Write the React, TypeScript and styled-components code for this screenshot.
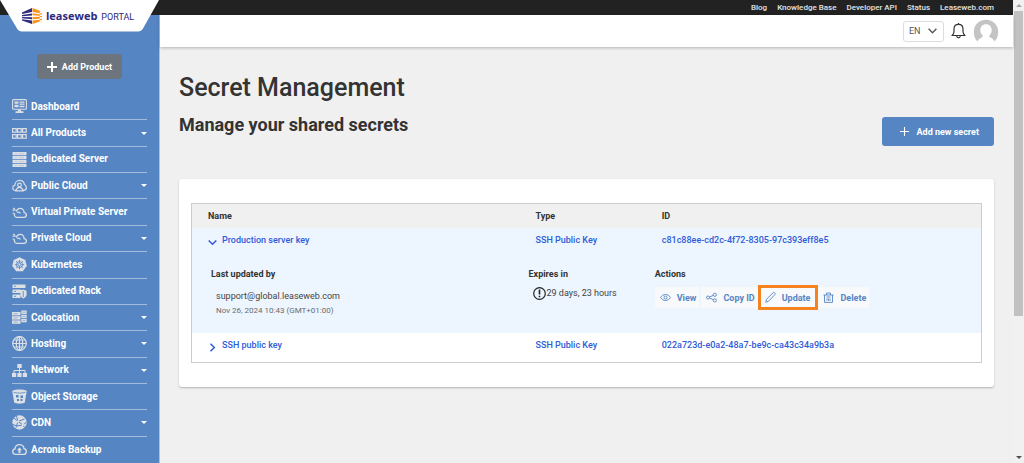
import React from "react";
import styled, { createGlobalStyle, css } from "styled-components";

const GlobalStyle = createGlobalStyle`
  *, *::before, *::after { box-sizing: border-box; }
  body {
    margin: 0;
    background: #f0f0f0;
    color: #333;
    font-family: Roboto, "Liberation Sans", sans-serif;
    font-size: 9px;
    line-height: 14px;
  }
  button, select { font: inherit; }
  a { color: inherit; text-decoration: none; }
  h1, h2, p, ul { margin: 0; padding: 0; }
`;

const Shell = styled.div`
  display: flex;
  min-height: 100vh;
`;

const Page = styled.div`
  position: relative;
  flex: 1;
  min-width: 0;
  display: flex;
  flex-direction: column;
`;

const TopBar = styled.nav`
  display: flex;
  justify-content: flex-end;
  gap: 10px;
  height: 15px;
  padding-right: 19px;
  background: #222;
  color: #e4e4e4;
  font-size: 8px;
  line-height: 15px;
  font-weight: 500;
`;

const Body = styled.div`
  flex: 1;
  display: flex;
`;

const Sidebar = styled.aside`
  width: 160px;
  flex: none;
  display: flex;
  flex-direction: column;
  background: #5685c4;
  border-right: 1px solid #a9c2e2;
`;

const LogoTab = styled.a`
  position: absolute;
  top: 0;
  left: 0;
  width: 159px;
  height: 32px;
  display: flex;
  gap: 4px;
  padding: 8px 0 0 22px;
  color: #2e2a80;
`;

const TabShape = styled.svg`
  position: absolute;
  inset: 0;
`;

const LogoMark = styled.svg`
  position: relative;
  flex: none;
`;

const Brand = styled.span`
  position: relative;
  font-family: "Open Sans", sans-serif;
  font-size: 11px;
  font-weight: 700;
  line-height: 15px;
`;

const BrandSuffix = styled.span`
  position: relative;
  font-size: 9px;
  line-height: 18px;
`;

const AddProduct = styled.button`
  display: flex;
  align-items: center;
  align-self: center;
  gap: 5px;
  height: 25px;
  margin: 39px 0 15px;
  padding: 0 10px;
  border: 0;
  border-radius: 3px;
  background: #6c757d;
  color: #fff;
  font-weight: 700;
`;

const Menu = styled.ul`
  flex: 1;
  display: grid;
  grid-auto-rows: minmax(26px, 1fr);
  padding: 0 12px;
  list-style: none;
`;

const MenuItem = styled.li`
  display: flex;
  border-bottom: 1px solid #a3bcdd;
  &:last-child { border-bottom: 0; }
`;

const MenuLink = styled.a`
  flex: 1;
  display: flex;
  align-items: center;
  gap: 4px;
  color: #fff;
  font-size: 10px;
  font-weight: 700;
`;

const Caret = styled.span`
  margin-left: auto;
  border: 3px solid transparent;
  border-top-color: #fff;
  border-bottom: 0;
`;

const Content = styled.div`
  flex: 1;
  min-width: 0;
`;

const Header = styled.header`
  display: flex;
  align-items: center;
  justify-content: flex-end;
  gap: 7px;
  height: 32px;
  padding-right: 14px;
  background: #fff;
  box-shadow: 0 1px 3px rgba(0, 0, 0, 0.25);
`;

const LanguageBox = styled.label`
  position: relative;
  display: flex;
  align-items: center;
`;

const Language = styled.select`
  appearance: none;
  width: 41px;
  height: 21px;
  padding: 0 0 0 5px;
  border: 1px solid #ddd;
  border-radius: 3px;
  background: #fff;
  color: #555;
`;

const LanguageArrow = styled.svg`
  position: absolute;
  right: 7px;
  pointer-events: none;
`;

const IconButton = styled.button`
  display: flex;
  padding: 0;
  border: 0;
  background: none;
  color: #333;
`;

const Main = styled.main`
  padding: 24px 19px;
`;

const Title = styled.h1`
  font-size: 25px;
  font-weight: 500;
  line-height: 34px;
`;

const SubRow = styled.div`
  display: flex;
  justify-content: space-between;
  align-items: flex-start;
  margin-bottom: 33px;
`;

const Subtitle = styled.h2`
  padding-top: 8px;
  font-size: 18px;
  font-weight: 700;
  line-height: 24px;
`;

const AddSecret = styled.button`
  display: flex;
  align-items: center;
  gap: 8px;
  height: 29px;
  margin-top: 12px;
  padding: 0 15px 0 18px;
  border: 0;
  border-radius: 3px;
  background: #5685c4;
  color: #fff;
  font-weight: 700;
`;

const Card = styled.section`
  padding: 24px 12px;
  border-radius: 3px;
  background: #fff;
  box-shadow: 0 1px 2px rgba(0, 0, 0, 0.25);
`;

const Frame = styled.div`
  border: 1px solid #ccc;
`;

const Table = styled.table`
  width: 100%;
  table-layout: fixed;
  border-collapse: collapse;
  text-align: left;
`;

const HeadCell = styled.th<{ $width?: string }>`
  width: ${(p) => p.$width ?? "auto"};
  height: 24px;
  padding: 0 0 0 20px;
  background: #f0f0f0;
  font-weight: 700;
  &:first-child { padding-left: 16px; }
`;

const Row = styled.tr<{ $open?: boolean }>`
  background: ${(p) => (p.$open ? "#edf5ff" : "#fff")};
`;

const Cell = styled.td`
  height: 29px;
  padding: 5px 0 0 20px;
  vertical-align: top;
  color: #2f5bd7;
  font-weight: 500;
  &:first-child { padding-left: 16px; }
`;

const Toggle = styled.button`
  display: flex;
  gap: 5px;
  padding: 0;
  border: 0;
  background: none;
  color: inherit;
  svg { margin-top: 5px; }
`;

const DetailCell = styled.td`
  height: 76px;
  padding: 10px 0 0 13px;
  vertical-align: top;
  &:first-child { padding-left: 19px; }
`;

const DetailTitle = styled.p`
  font-weight: 700;
`;

const Author = styled.p`
  padding: 8px 0 0 5px;
  color: #444;
`;

const Stamp = styled.p`
  padding: 1px 0 0 5px;
  color: #6b6b6b;
  font-size: 8px;
`;

const Expiry = styled.p`
  display: flex;
  align-items: center;
  padding: 5px 0 0 5px;
  color: #444;
`;

const Actions = styled.div`
  display: flex;
  gap: 2px;
  padding-top: 6px;
`;

const Action = styled.button<{ $highlight?: boolean }>`
  display: flex;
  align-items: center;
  gap: 6px;
  height: 21px;
  padding: 0 3px 0 5px;
  border: 0;
  border-radius: 2px;
  background: #f8f9fb;
  color: #5685c4;
  font-weight: 700;
  white-space: nowrap;
  ${(p) =>
    p.$highlight &&
    css`
      padding: 0 6px 0 5px;
      border-radius: 0;
      outline: 3px solid #f5811f;
      outline-offset: -1px;
    `}
`;

const ScrollTrack = styled.div`
  width: 11px;
  flex: none;
  display: flex;
  flex-direction: column;
  align-items: center;
  padding: 4px 0;
  background: #f1f1f1;
`;

const ScrollArrow = styled.span<{ $down?: boolean }>`
  border: 3px solid transparent;
  ${(p) =>
    p.$down
      ? css`border-top-color: #505050; border-bottom: 0;`
      : css`border-bottom-color: #a3a3a3; border-top: 0;`}
`;

const ScrollThumb = styled.div`
  width: 9px;
  height: 67%;
  margin: 4px 0 auto;
  background: #c1c1c1;
`;

const BG = "#5685c4";

const icons: Record<string, React.ReactNode> = {
  dashboard: (
    <>
      <rect x="0.6" y="0.6" width="13.8" height="9.6" rx="1" fill="none" stroke="currentColor" strokeWidth="1.1" />
      <path d="M2.5 2.5h4v2.3h-4zM7.5 2.5h5v1.2h-5zM7.5 4.6h5v1.2h-5zM2.5 5.8h4v2.4h-4zM7.5 6.8h5v1.4h-5zM6 10.5h3v2H6zM3.5 12.2h8V14h-8z" />
    </>
  ),
  grid: (
    <g fill="none" stroke="currentColor" strokeWidth="1.2">
      {[0.6, 5.6, 10.6].map((x) => (
        <React.Fragment key={x}>
          <rect x={x} y="2.6" width="3.6" height="3.6" />
          <rect x={x} y="8.6" width="3.6" height="3.6" />
        </React.Fragment>
      ))}
    </g>
  ),
  server: (
    <>
      {[0, 4, 8, 12].map((y) => (
        <React.Fragment key={y}>
          <rect x="0.5" y={y} width="14" height="3.2" rx="0.5" />
          <path d={`M3 ${y + 1.6}h2M7 ${y + 1.6}h5`} stroke="#b4c5dc" strokeWidth="0.7" />
        </React.Fragment>
      ))}
    </>
  ),
  publicCloud: (
    <g fill="none" stroke="currentColor" strokeWidth="1.2">
      <path d="M4 12.4H3.4C1.8 12.4.7 11.2.7 9.8c0-1.3.9-2.3 2.1-2.5C2.9 4.5 4.9 2.4 7.6 2.4c2.5 0 4.4 1.7 4.8 4.1 1.2.5 2 1.600 2 3 0 1.700-1.200 2.900-2.800 2.900H11" />
      <circle cx="7.5" cy="7" r="1.8" />
      <path d="M3.800 12.800c.6-2 1.900-3.400 3.700-3.400s3.100 1.400 3.700 3.400z" />
    </g>
  ),
  cloud: (
    <g fill="none" stroke="currentColor" strokeWidth="1.3">
      <path d="M3 8.500c-.6.500-.8 1-.6 1.900.3 1.200 1.300 2 2.600 2h6.800c1.500 0 2.600-1 2.600-2.400 0-1.300-1-2.300-2.300-2.400 0-2.400-1.600-4.200-3.800-4.200-2 0-3.500 1.300-3.900 3.200" />
      <path d="M.5 5.200h3.300M1.300 2.900l1.500 1.200M.7 8.500l1.300-.7M5 7.500c1.400-.6 2.800-.2 3.400 1" />
    </g>
  ),
  kubernetes: (
    <>
      <path d="M7.500.2l5.800 2.700 1.500 6.200-4 5.200H4.200l-4-5.200 1.500-6.200z" />
      <g fill="none" stroke={BG} strokeWidth="0.8">
        <circle cx="7.500" cy="7.600" r="3.100" />
        <path d="M7.500 3v9.200M2.900 7.600h9.200M4.200 4.300l6.600 6.600M10.800 4.300l-6.600 6.600" />
      </g>
      <circle cx="7.500" cy="7.600" r="1" />
    </>
  ),
  rack: (
    <>
      <rect x="0.500" y="0.500" width="13" height="3.600" rx=".5" />
      <rect x="0.500" y="5.500" width="9" height="3.600" rx=".5" />
      <rect x="0.500" y="10.500" width="8" height="3.600" rx=".5" />
      <path d="M11.300 5.500l3.300 1.200v3.500c0 2-1.300 3.400-3.300 4.300-2-.9-3-2.300-3-4.300V6.700z" />
      <path d="M11.300 7v6M2 2.300h2M2 7.300h2M2 12.300h2" stroke={BG} strokeWidth=".8" />
    </>
  ),
  colocation: (
    <>
      {[2, 6.2, 10.4].map((y) => (
        <React.Fragment key={y}>
          <rect x="0" y={y} width="8.500" height="3.400" />
          <rect x="9.300" y={y - 1.5} width="5.400" height="3.400" />
          <path d={`M1.500 ${y + 1.7}h4M10.500 ${y + 0.2}h3`} stroke="#86a5d0" strokeWidth=".8" />
        </React.Fragment>
      ))}
    </>
  ),
  globe: (
    <g fill="none" stroke="currentColor" strokeWidth="1.200">
      <circle cx="7.500" cy="7.500" r="6.800" />
      <ellipse cx="7.500" cy="7.500" rx="3.200" ry="6.800" />
      <path d="M7.500.7v13.600M.7 7.500h13.600M1.800 4h11.400M1.800 11h11.400" />
    </g>
  ),
  network: (
    <>
      <path d="M5.300 1h4.400v4H5.300zM0 10h4.200v4H0zM5.400 10h4.200v4H5.400zM10.800 10H15v4h-4.200z" />
      <path d="M7.500 5v5M2 10V7.500h11V10" fill="none" stroke="currentColor" />
    </>
  ),
  bucket: (
    <>
      <path d="M.3 2.200C.3-.2 14.700-.2 14.700 2.200L12.800 13.500c-1.500 1.500-9.100 1.500-10.600 0z" />
      <path d="M1.500 3.200c2.500 1.200 9.500 1.200 12 0" stroke={BG} strokeWidth=".8" fill="none" />
      <path d="M4 6h2.500v2.500H4zM8.500 6.500h2.500V9H8.500zM5 10h2v2H5zM8.500 10h2v2h-2z" fill={BG} />
    </>
  ),
  cdn: (
    <>
      <circle cx="7.500" cy="7.500" r="7.200" />
      <path d="M2 3l4 3.500L12.500 4M6 6.500l-2 6M6 6.500l5 3.500 1.500 2.500M11 10l3.500-3M4.500 1L6 6.500M0 9l4.500 2L11 10" stroke={BG} strokeWidth="1" fill="none" />
      <circle cx="6" cy="6.500" r="1.300" />
      <circle cx="10.800" cy="10" r="1.200" />
    </>
  ),
  backup: (
    <g fill="none" stroke="currentColor" strokeWidth="1.300">
      <path d="M3.700 12.400C2 12.400.7 11.200.7 9.600c0-1.400 1-2.500 2.300-2.700.2-2.500 2-4.300 4.500-4.300 2.400 0 4.200 1.700 4.500 4 1.400.2 2.300 1.300 2.300 2.800 0 1.700-1.200 3-2.900 3z" />
      <path d="M7.500 11V7.500" strokeWidth="2" />
      <path d="M4.900 8.200h5.200L7.500 5.500z" fill="currentColor" stroke="none" />
    </g>
  ),
};

const menu: { label: string; icon: string; sub?: boolean }[] = [
  { label: "Dashboard", icon: "dashboard" },
  { label: "All Products", icon: "grid", sub: true },
  { label: "Dedicated Server", icon: "server" },
  { label: "Public Cloud", icon: "publicCloud", sub: true },
  { label: "Virtual Private Server", icon: "cloud" },
  { label: "Private Cloud", icon: "cloud", sub: true },
  { label: "Kubernetes", icon: "kubernetes" },
  { label: "Dedicated Rack", icon: "rack" },
  { label: "Colocation", icon: "colocation", sub: true },
  { label: "Hosting", icon: "globe", sub: true },
  { label: "Network", icon: "network", sub: true },
  { label: "Object Storage", icon: "bucket" },
  { label: "CDN", icon: "cdn", sub: true },
  { label: "Acronis Backup", icon: "backup" },
];

const Plus = ({ size, weight }: { size: number; weight: number }) => (
  <svg width={size} height={size} viewBox="0 0 10 10" stroke="currentColor" strokeWidth={weight} aria-hidden="true">
    <path d="M5 0v10M0 5h10" />
  </svg>
);

const Chevron = ({ open }: { open?: boolean }) => (
  <svg width="9" height="9" viewBox="0 0 9 9" fill="none" stroke="currentColor" strokeWidth="1.500" aria-hidden="true">
    <path d={open ? "M.7 2.500l3.800 3.800 3.800-3.800" : "M2.500.7l3.800 3.800-3.800 3.800"} />
  </svg>
);

const ActionIcon = ({ children }: { children: React.ReactNode }) => (
  <svg width="11" height="11" viewBox="0 0 11 11" fill="none" stroke="currentColor" strokeWidth="0.900" aria-hidden="true">
    {children}
  </svg>
);

export default function App() {
  return (
    <>
      <GlobalStyle />
      <Shell>
        <Page>
          <TopBar aria-label="Site links">
            {["Blog", "Knowledge Base", "Developer API", "Status", "Leaseweb.com"].map((l) => (
              <a key={l} href="#">{l}</a>
            ))}
          </TopBar>
          <Body>
            <Sidebar>
              <AddProduct type="button">
                <Plus size={10} weight={2} />
                Add Product
              </AddProduct>
              <Menu>
                {menu.map((m) => (
                  <MenuItem key={m.label}>
                    <MenuLink href="#">
                      <svg width="15" height="15" viewBox="0 0 15 15" fill="currentColor" color="#dcdfe3" aria-hidden="true">
                        {icons[m.icon]}
                      </svg>
                      {m.label}
                      {m.sub && <Caret />}
                    </MenuLink>
                  </MenuItem>
                ))}
              </Menu>
            </Sidebar>
            <Content>
              <Header>
                <LanguageBox>
                  <Language aria-label="Language" defaultValue="EN">
                    <option>EN</option>
                    <option>NL</option>
                  </Language>
                  <LanguageArrow width="9" height="6" viewBox="0 0 9 6" fill="none" stroke="#555" strokeWidth="1.400">
                    <path d="M.6.700l3.900 4 3.900-4" />
                  </LanguageArrow>
                </LanguageBox>
                <IconButton type="button" aria-label="Notifications">
                  <svg width="15" height="16" viewBox="0 0 15 16" fill="none" stroke="currentColor" strokeWidth="1.200">
                    <path d="M1 12.500c1.300-1 2-2.200 2-4V6c0-2.700 1.800-4.700 4.500-4.700S12 3.300 12 6v2.500c0 1.800.7 3 2 4z" strokeLinejoin="round" />
                    <path d="M5.700 13c.2 1.200.900 1.800 1.800 1.800s1.600-.6 1.800-1.800M7.500 0v1.300" />
                  </svg>
                </IconButton>
                <IconButton type="button" aria-label="Account">
                  <svg width="26" height="24" viewBox="0 0 26 24">
                    <path d="M4.500 22.500C2 20 .8 16.500.8 13 .8 6 6 .8 13 .8S25.200 6 25.200 13c0 3.500-1.200 7-3.700 9.500-.8-2-2.500-3.300-4.600-4.200-.8-.4-.8-1.500-.2-2.300 1.300-1.300 2-3 2-5C18.700 7.500 16.400 5.200 13 5.200S7.300 7.500 7.300 11c0 2 .7 3.700 2 5 .6.8.6 1.900-.2 2.300-2.100.9-3.800 2.200-4.600 4.200z" fill="#c4c4c4" />
                  </svg>
                </IconButton>
              </Header>
              <Main>
                <Title>Secret Management</Title>
                <SubRow>
                  <Subtitle>Manage your shared secrets</Subtitle>
                  <AddSecret type="button">
                    <Plus size={9} weight={1.2} />
                    Add new secret
                  </AddSecret>
                </SubRow>
                <Card>
                  <Frame>
                    <Table>
                      <thead>
                        <tr>
                          <HeadCell scope="col" $width="41%">Name</HeadCell>
                          <HeadCell scope="col" $width="16%">Type</HeadCell>
                          <HeadCell scope="col">ID</HeadCell>
                        </tr>
                      </thead>
                      <tbody>
                        <Row $open>
                          <Cell>
                            <Toggle type="button" aria-expanded="true">
                              <Chevron open />
                              Production server key
                            </Toggle>
                          </Cell>
                          <Cell>SSH Public Key</Cell>
                          <Cell>c81c88ee-cd2c-4f72-8305-97c393eff8e5</Cell>
                        </Row>
                        <Row $open>
                          <DetailCell>
                            <DetailTitle>Last updated by</DetailTitle>
                            <Author>support@global.leaseweb.com</Author>
                            <Stamp>Nov 26, 2024 10:43 (GMT+01:00)</Stamp>
                          </DetailCell>
                          <DetailCell>
                            <DetailTitle>Expires in</DetailTitle>
                            <Expiry>
                              <svg width="13" height="13" viewBox="0 0 13 13" fill="none" stroke="#222" aria-hidden="true">
                                <circle cx="6.500" cy="6.500" r="5.800" strokeWidth="1.200" />
                                <path d="M6.500 2.500v5M6.500 8.800v1.500" strokeWidth="1.600" />
                              </svg>
                              29 days, 23 hours
                            </Expiry>
                          </DetailCell>
                          <DetailCell>
                            <DetailTitle>Actions</DetailTitle>
                            <Actions>
                              <Action type="button">
                                <ActionIcon>
                                  <path d="M.6 5.500C3 1.500 8 1.500 10.400 5.500 8 9.500 3 9.500.6 5.500z" />
                                  <circle cx="5.500" cy="5.500" r="1.500" />
                                </ActionIcon>
                                View
                              </Action>
                              <Action type="button">
                                <ActionIcon>
                                  <circle cx="2" cy="5.500" r="1.500" />
                                  <circle cx="8.800" cy="2.800" r="1.600" />
                                  <circle cx="8.800" cy="8.400" r="1.600" />
                                  <path d="M3.400 5l4-1.600M3.400 6l4 1.700" />
                                </ActionIcon>
                                Copy ID
                              </Action>
                              <Action type="button" $highlight>
                                <ActionIcon>
                                  <path d="M.8 10.200l.7-2.900L8 .9c.6-.6 1.300-.5 1.800 0s.6 1.200 0 1.800L3.500 9.300z" />
                                </ActionIcon>
                                Update
                              </Action>
                              <Action type="button">
                                <ActionIcon>
                                  <path d="M.5 3h10M3.500 3V1h4v2M1.500 3v7.400h8V3M3.500 5h4M4 6.500v2.300M5.500 6.500v2.300M7 6.500v2.300" />
                                </ActionIcon>
                                Delete
                              </Action>
                            </Actions>
                          </DetailCell>
                        </Row>
                        <Row>
                          <Cell>
                            <Toggle type="button" aria-expanded="false">
                              <Chevron />
                              SSH public key
                            </Toggle>
                          </Cell>
                          <Cell>SSH Public Key</Cell>
                          <Cell>022a723d-e0a2-48a7-be9c-ca43c34a9b3a</Cell>
                        </Row>
                      </tbody>
                    </Table>
                  </Frame>
                </Card>
              </Main>
            </Content>
          </Body>
          <LogoTab href="#" aria-label="Leaseweb Portal">
            <TabShape width="159" height="32" viewBox="0 0 159 32" fill="#fff" aria-hidden="true">
              <path d="M0 0h159l-16 28.500q-1.700 3-5 3H22q-3.300 0-5-3L0 0z" />
            </TabShape>
            <LogoMark width="20" height="16" viewBox="0 0 20 16" aria-hidden="true">
              <path d="M0 4.500L10 0v4L0 6zM0 7l10-1.500v2L0 8.200zM0 9l10 .2v2L0 10.300zM0 11.300l10 1.300V16L0 12.600z" fill="#2e2a80" />
              <path d="M10.500 0L20 3.500v2L10.500 4zM10.500 5.300L20 6.700v1.200l-9.500-.6zM10.500 9l9.500-.2v1.600l-9.500.900zM10.500 12.600l9.500-1.200v1.400L10.500 16zM17.800 3v10L20 12.500v-9z" fill="#f7941d" />
            </LogoMark>
            <Brand>leaseweb</Brand>
            <BrandSuffix>PORTAL</BrandSuffix>
          </LogoTab>
        </Page>
        <ScrollTrack aria-hidden="true">
          <ScrollArrow />
          <ScrollThumb />
          <ScrollArrow $down />
        </ScrollTrack>
      </Shell>
    </>
  );
}
